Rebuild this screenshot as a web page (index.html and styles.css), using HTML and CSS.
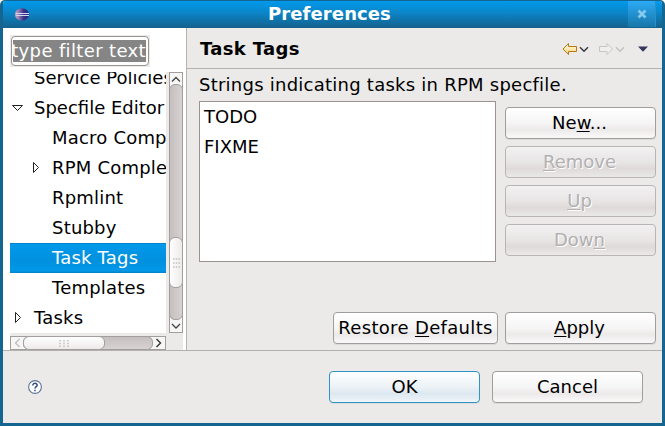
FILE: index.html
```html
<!DOCTYPE html>
<html lang="en">
<head>
<meta charset="utf-8">
<title>Preferences</title>
<link rel="stylesheet" href="styles.css">
</head>
<body>
<div class="window">
  <header class="titlebar">
    <svg class="logo" width="14" height="13" viewBox="0 0 14 13">
      <defs><linearGradient id="orb" x1="0" x2="1"><stop offset="0" stop-color="#dba8c0"/><stop offset=".3" stop-color="#8a76ac"/><stop offset=".6" stop-color="#38358a"/><stop offset="1" stop-color="#28287c"/></linearGradient></defs>
      <ellipse cx="7" cy="6.5" rx="7" ry="6.2" fill="url(#orb)"/>
      <path d="M1 5.5H14M1 7.5H14" stroke="#d4d6f0"/>
    </svg>
    <h1>Preferences</h1>
    <div class="close"><svg width="10" height="10" viewBox="0 0 10 10"><path d="M1.500 1.500l7 7M8.500 1.500l-7 7" stroke="#86caee" stroke-width="2.600"/></svg></div>
  </header>
  <main class="main">
    <aside class="sidebar">
      <div class="filter"><div class="filter-box"><span>type filter text</span></div></div>
      <div class="tree-area">
        <ul class="tree">
          <li>Service Policies</li>
          <li><svg class="arrow" width="13" height="8" viewBox="0 0 13 8"><path d="M1.5 1.5H11.5L6.5 6.5Z"/></svg>Specfile Editor</li>
          <li class="child">Macro Completions</li>
          <li class="child"><svg class="arrow side" width="8" height="13" viewBox="0 0 8 13"><path d="M1.5 1.5V11.5L6.5 6.5Z"/></svg>RPM Completions</li>
          <li class="child">Rpmlint</li>
          <li class="child">Stubby</li>
          <li class="child selected">Task Tags</li>
          <li class="child">Templates</li>
          <li><svg class="arrow side" width="8" height="13" viewBox="0 0 8 13"><path d="M1.5 1.5V11.5L6.5 6.5Z"/></svg>Tasks</li>
        </ul>
        <div class="vscroll">
          <svg width="14" height="261" viewBox="0 0 14 261">
            <defs>
              <linearGradient id="vt" x1="0" x2="1"><stop offset="0" stop-color="#c4bebe"/><stop offset="1" stop-color="#d8d3d3"/></linearGradient>
              <linearGradient id="vh" x1="0" x2="1"><stop offset="0" stop-color="#fff"/><stop offset="1" stop-color="#ece9e9"/></linearGradient>
            </defs>
            <rect x=".5" y=".5" width="13" height="260" fill="#f7f6f6" stroke="#a39d9d"/>
            <rect x=".5" y="12.5" width="13" height="235" rx="5.5" fill="url(#vt)" stroke="#a39d9d"/>
            <rect x=".5" y="165.500" width="13" height="50" rx="5.500" fill="url(#vh)" stroke="#a39d9d"/>
            <path d="M3 9.500l4-4L11 9.500M3 252l4 4 4-4" fill="none" stroke="#444" stroke-width="1.300"/>
            <path d="M4 187h7M4 191h7M4 195h7" stroke="#c4c0c0" stroke-width="1.500" stroke-dasharray="1.500 1.200"/>
          </svg>
        </div>
      </div>
      <div class="hscroll">
        <svg width="156" height="14" viewBox="0 0 156 14">
          <defs>
            <linearGradient id="ht" x2="0" y2="1"><stop offset="0" stop-color="#c4bebe"/><stop offset="1" stop-color="#d8d3d3"/></linearGradient>
            <linearGradient id="hh" x2="0" y2="1"><stop offset="0" stop-color="#fff"/><stop offset="1" stop-color="#ece9e9"/></linearGradient>
          </defs>
          <rect x=".5" y=".5" width="155" height="13" fill="#f7f6f6" stroke="#a39d9d"/>
          <rect x="13.500" y=".5" width="129" height="13" rx="5.500" fill="url(#ht)" stroke="#a39d9d"/>
          <rect x="13.500" y=".5" width="81" height="13" rx="5.500" fill="url(#hh)" stroke="#a39d9d"/>
          <path d="M9.500 3L5.500 7l4 4" fill="none" stroke="#bbb" stroke-width="1.200"/>
          <path d="M146.500 3L150.500 7l-4 4" fill="none" stroke="#333" stroke-width="1.400"/>
          <path d="M50 4v7M54 4v7M58 4v7" stroke="#c4c0c0" stroke-width="1.500" stroke-dasharray="1.500 1.200"/>
        </svg>
      </div>
    </aside>
    <section class="page">
      <div class="page-head">
        <h2>Task Tags</h2>
        <svg width="88" height="14" viewBox="0 0 88 14">
          <defs><linearGradient id="gold" x2="0" y2="1"><stop offset="0" stop-color="#fffef0"/><stop offset="1" stop-color="#fbd36d"/></linearGradient></defs>
          <path d="M1 7L6.500 1.500V4.500H14.500V9.500H6.500V12.500Z" fill="url(#gold)" stroke="#b57a16"/>
          <path d="M18 5.200L22 9.200l4-4" fill="none" stroke="#3a3a42" stroke-width="1.500"/>
          <path d="M50.500 7L45 1.500V4.500H37.500V9.500H45V12.500Z" fill="#efeeed" stroke="#c6c6c6"/>
          <path d="M54 5.200L58 9.200l4-4" fill="none" stroke="#c2c2c2" stroke-width="1.400"/>
          <path d="M76 4.500H86L81 9.800Z" fill="#38355f"/>
        </svg>
      </div>
      <div class="page-body">
        <p>Strings indicating tasks in RPM specfile.</p>
        <div class="editor">
          <ul class="tags"><li>TODO</li><li>FIXME</li></ul>
          <div class="actions">
            <button>Ne<u>w</u>...</button>
            <button disabled><u>R</u>emove</button>
            <button disabled><u>U</u>p</button>
            <button disabled>Dow<u>n</u></button>
          </div>
        </div>
        <div class="page-buttons">
          <button class="restore">Restore <u>D</u>efaults</button>
          <button><u>A</u>pply</button>
        </div>
      </div>
    </section>
  </main>
  <footer class="footer">
    <svg class="help" width="14" height="14" viewBox="0 0 14 14"><circle cx="7" cy="7" r="6.400" fill="#fff" stroke="#5d7597" stroke-width="1.100"/><path d="M4.800 5.400C4.800 2.600 9.300 2.700 9.200 5.300C9.100 6.700 7 6.700 7 8.600M7 9.700v1.600" fill="none" stroke="#334f7c" stroke-width="1.500"/></svg>
    <button class="primary">OK</button>
    <button>Cancel</button>
  </footer>
</div>
</body>
</html>
```
FILE: styles.css
```css
* { box-sizing: border-box; }
html { background: #fff; }
body { margin: 0; font: 18px/30px "DejaVu Sans", sans-serif; color: #000; }
ul, p, h1, h2 { margin: 0; padding: 0; list-style: none; }
svg { display: block; }
.window {
  width: 665px; height: 426px; display: flex; flex-direction: column;
  border: solid #14658f; border-width: 1px 3px 3px; border-radius: 5px 5px 0 0;
  background: #ebeae8; overflow: hidden;
}
.titlebar {
  height: 27px; flex: none; display: flex; align-items: center;
  background: linear-gradient(#0199ec, #0b87cb 40%, #14618c);
  color: #fff;
}
.logo { margin-left: 12px; }
h1 { flex: 1; padding-left: 2px; font-size: 18px; line-height: 25px; height: 27px; text-align: center; letter-spacing: 0.1px; }
.close {
  width: 28px; height: 26px; margin-right: 6px; align-self: flex-start;
  display: grid; place-items: center; border-right: 1px solid #2592cb;
  background: linear-gradient(#2caaf5, #1877a9);
}
.main { height: 323px; flex: none; display: flex; border-bottom: 1px solid #b3b1b0; }
.sidebar {
  width: 184px; height: 322px; flex: none; padding: 7px 0 0 7px;
  background: #fff; border-right: 1px solid #b5b3b2; overflow: hidden;
}
.filter { width: 140px; height: 32px; padding: 1px; background: #ebeae8; }
.filter-box {
  height: 30px; padding: 3px 2px 3px 1px; overflow: hidden;
  border: 1px solid #9d9292; border-radius: 4px; background: #fff;
}
.filter-box span {
  display: flex; justify-content: flex-end; height: 22px; line-height: 22px; overflow: hidden;
  background: #858585; color: #fff; white-space: nowrap; letter-spacing: 0.36px;
}
.tree-area { display: flex; width: 173px; height: 261px; margin-top: 5px; }
.tree { width: 156px; overflow: hidden; white-space: nowrap; }
.tree li { position: relative; height: 30px; padding-left: 24px; }
.tree li:first-child { margin-top: -9px; }
.tree .child { padding-left: 42px; letter-spacing: 0.2px; }
.tree li:last-child { letter-spacing: 0.2px; }
.tree .selected { background: linear-gradient(#0284cd 0 1px, #0499eb 1px, #0090de 60%, #0298e9 28px, #0284cd 29px); color: #fff; }
.arrow { position: absolute; left: 1px; top: 11px; fill: #fff; stroke: #222; }
.arrow.side { left: 4px; top: 8px; }
.child .arrow.side { left: 22px; }
.vscroll { width: 17px; padding-left: 3px; background: #ebeae8; }
.hscroll { width: 173px; height: 17px; padding-top: 3px; background: #ebeae8; }
.page { flex: 1; }
.page-head {
  height: 41px; display: flex; justify-content: space-between; align-items: center;
  padding: 0 12px 0 13px; border-bottom: 1px solid #b3b1b0;
}
h2 { padding-top: 1px; font-size: 18px; line-height: 40px; letter-spacing: 0.35px; }
.page-head svg { margin-top: 2px; }
.page-body { padding: 1px 6px 0 12px; }
p { letter-spacing: 0.245px; }
.editor { display: flex; gap: 9px; margin-top: 1px; }
.tags { width: 297px; height: 161px; border: 1px solid #9d9292; background: #fff; padding-left: 4px; }
.actions { display: flex; flex-direction: column; gap: 7px; padding-top: 6px; }
button {
  width: 151px; height: 32px; padding: 0 2px 0 0; border: 1px solid #a19d9c; border-radius: 4px;
  background: linear-gradient(#fff, #f6f5f5 50%, #ece9e9 72%, #faf9f9);
  color: #000; font: inherit; line-height: 28px; box-shadow: 0 1px 0 #dddbda;
}
button u { text-decoration-thickness: 1px; text-underline-offset: 2px; text-decoration-skip-ink: none; }
button:disabled {
  border-color: #b9b5b4; background: linear-gradient(#f2f1f1, #e8e5e5 50%, #dfdada 72%, #eae8e8);
  color: #b2b0b0; text-shadow: 1px 1px #fff; box-shadow: none;
}
.page-buttons { display: flex; justify-content: flex-end; gap: 7px; margin-top: 50px; }
.restore { width: 165px; padding: 0; letter-spacing: 0.33px; }
.footer { flex: 1; display: flex; align-items: flex-start; gap: 12px; padding: 20px 19px 0 25px; }
.footer button { padding: 0; }
.help { margin: 9px auto 0 0; }
.primary { border-color: #2f93c8; background: linear-gradient(#fff, #ecf2f6 50%, #dce8f0 72%, #f0f5f8); }
```
